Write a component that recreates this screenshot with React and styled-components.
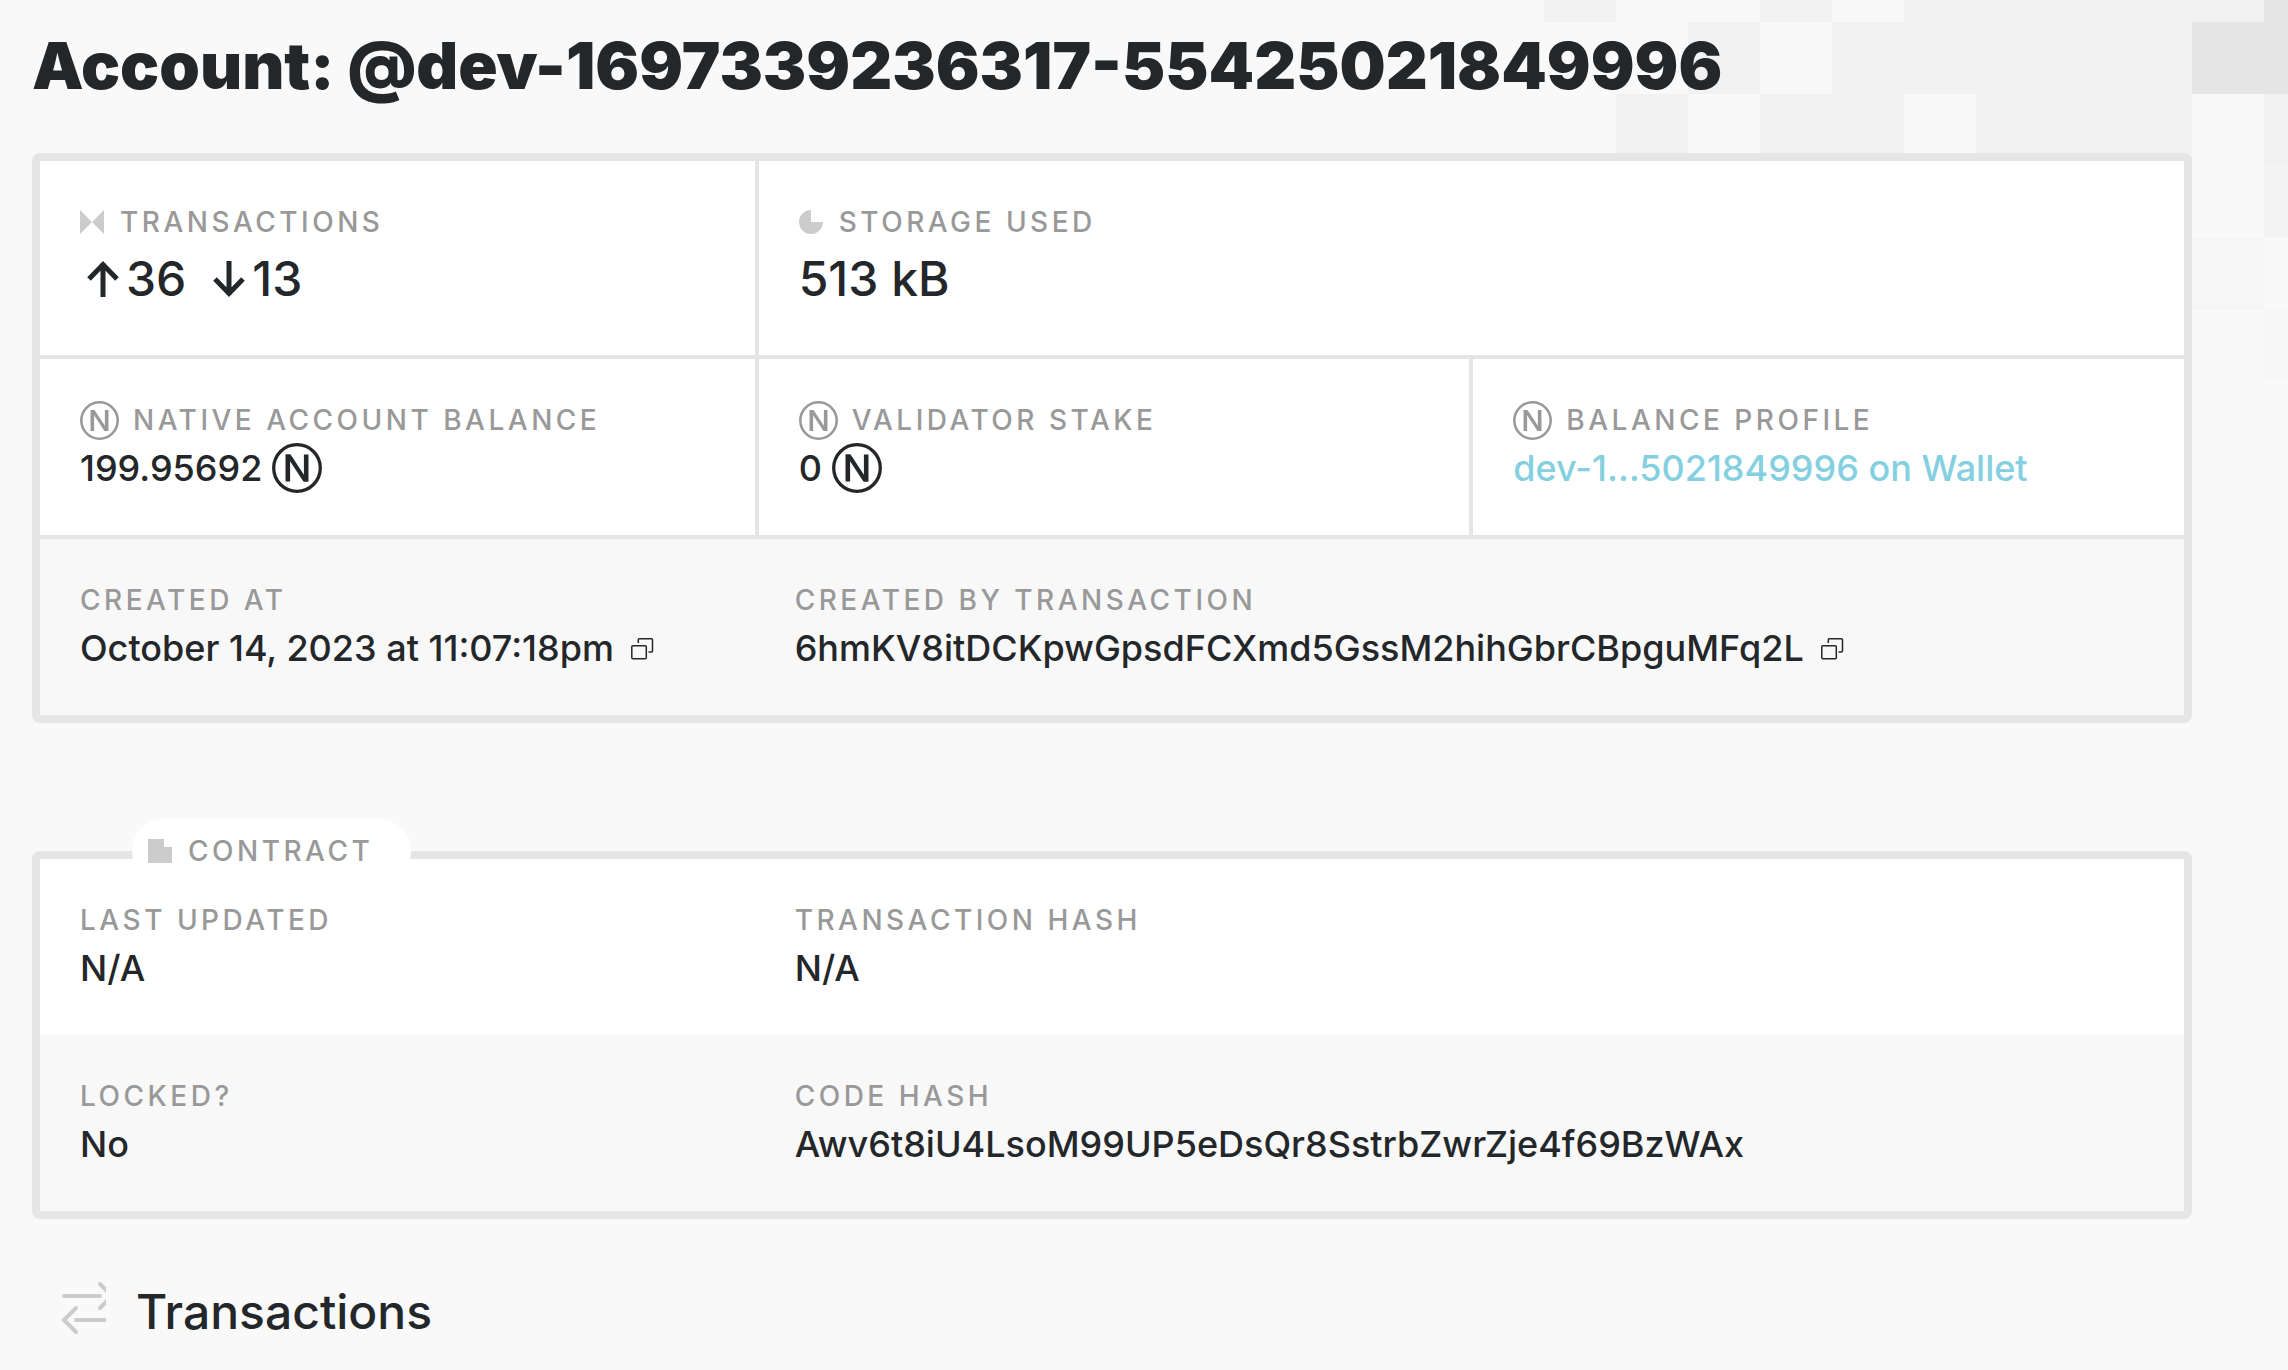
import React from 'react';
import styled, { createGlobalStyle } from 'styled-components';

const line = '#e5e5e5';
const ink = '#24272a';
const muted = '#999999';

const GlobalStyle = createGlobalStyle`
  * { box-sizing: border-box; }
  body {
    margin: 0;
    background: #f9f9f9;
    color: ${ink};
    font-family: Inter, 'Liberation Sans', sans-serif;
    font-size: 36px;
    font-weight: 500;
    line-height: 48px;
  }
`;

const Page = styled.div`
  position: relative;
  min-height: 100vh;
  overflow: hidden;
  display: flex;
  flex-direction: column;
`;

const Backdrop = styled.svg`
  position: absolute;
  top: 0;
  right: 0;
`;

const Main = styled.main`
  position: relative;
  flex: 1;
  padding: 24px 96px 30px 32px;
`;

const Title = styled.h1`
  margin: 0 0 45px;
  font-size: 65px;
  font-weight: 900;
  line-height: 84px;
`;

const Card = styled.section`
  position: relative;
  border: 8px solid ${line};
  border-radius: 8px;
  background: #ffffff;
  margin-bottom: ${(p) => p.$gap}px;
`;

const Row = styled.div`
  display: grid;
  grid-template-columns: repeat(3, 1fr);
  background: ${(p) => (p.$shaded ? '#f8f8f8' : '#ffffff')};
  border-top: ${(p) => (p.$ruled ? 4 : 0)}px solid ${line};
`;

const Cell = styled.div`
  grid-column: span ${(p) => p.$span || 1};
  padding: 37px 40px 43px;
  border-left: ${(p) => (p.$divided ? 4 : 0)}px solid ${line};
`;

const Label = styled.h2`
  display: flex;
  align-items: center;
  gap: ${(p) => p.$gap || 16}px;
  margin: 0;
  color: ${muted};
  font-size: 28px;
  font-weight: 500;
  line-height: 48px;
  letter-spacing: 0.125em;
  text-transform: uppercase;
`;

const Value = styled.div`
  display: flex;
  align-items: center;
  gap: ${(p) => p.$gap || 0}px;
  height: ${(p) => (p.$large ? 66 : 48)}px;
  font-size: ${(p) => (p.$large ? 48 : 36)}px;
  line-height: ${(p) => (p.$large ? 66 : 48)}px;
  white-space: nowrap;
`;

const Count = styled.span`
  display: flex;
  align-items: center;
`;

const WalletLink = styled.a`
  color: #84d0e0;
  text-decoration: none;
`;

const CopyButton = styled.button`
  display: flex;
  padding: 0;
  border: 0;
  background: none;
  color: ${ink};
  cursor: pointer;
`;

const Tab = styled.div`
  position: absolute;
  top: -40px;
  left: 92px;
  height: 64px;
  padding: 8px 38px 8px 16px;
  border-radius: 32px;
  background: #ffffff;
`;

const SectionHeading = styled.h2`
  display: flex;
  align-items: center;
  gap: 30px;
  margin: 0;
  padding-left: 28px;
  font-size: 48px;
  font-weight: 500;
  line-height: 64px;
`;

const FooterStrip = styled.div`
  position: relative;
  height: 13px;
  background: #f7f7f7;
`;

const tiles = [
  [0, 0, 72, 22, '#f1f1f1'],
  [216, 0, 72, 22, '#f1f1f1'],
  [360, 0, 360, 22, '#f1f1f1'],
  [720, 0, 24, 22, line],
  [144, 22, 72, 72, '#f1f1f1'],
  [288, 22, 360, 72, '#f1f1f1'],
  [648, 22, 96, 72, line],
  [72, 94, 72, 72, '#f1f1f1'],
  [216, 94, 144, 72, '#f1f1f1'],
  [432, 94, 216, 72, '#f1f1f1'],
  [720, 94, 24, 72, '#f1f1f1'],
  [720, 166, 24, 72, '#f3f3f3'],
  [648, 238, 72, 72, '#f6f6f6'],
  [720, 310, 24, 72, '#f7f7f7'],
];

const Mosaic = () => (
  <Backdrop width="744" height="382" aria-hidden="true">
    {tiles.map(([x, y, w, h, fill]) => (
      <rect key={`${x}-${y}`} x={x} y={y} width={w} height={h} fill={fill} />
    ))}
  </Backdrop>
);

const BowtieIcon = () => (
  <svg width="24" height="24" viewBox="0 0 24 24" fill="#cccccc" aria-hidden="true">
    <path d="M0 0 12 12 0 24zM24 0 12 12 24 24z" />
  </svg>
);

const PieIcon = () => (
  <svg width="24" height="24" viewBox="0 0 24 24" fill="#cccccc" aria-hidden="true">
    <path d="M12 0A12 12 0 1 0 24 12H12z" />
  </svg>
);

const DocIcon = () => (
  <svg width="24" height="24" viewBox="0 0 24 24" fill="#cccccc" aria-hidden="true">
    <path d="M0 0h16v8h8v16H0z" />
  </svg>
);

const NearIcon = ({ size }) => (
  <svg width={size} height={size} viewBox="0 0 50 50" fill="none" stroke="currentColor" aria-hidden="true">
    <circle cx="25" cy="25" r="23.3" strokeWidth="3.3" />
    <path d="M15.8 38.5V11.5M34.2 38.5V11.5" strokeWidth="4.6" />
    <path d="M13.6 11.5H18.6L36.4 38.5H31.4z" fill="currentColor" stroke="none" />
  </svg>
);

const ArrowIcon = ({ down }) => (
  <svg width="46" height="48" viewBox="0 0 46 48" fill="none" stroke="currentColor" strokeWidth="5" aria-hidden="true">
    <path d={down ? 'M23 6V40M9 24 23 38.5 37 24' : 'M23 42V8M9 24 23 9.5 37 24'} />
  </svg>
);

const CopyIcon = () => (
  <svg width="24" height="24" viewBox="0 0 24 24" fill="none" stroke="currentColor" strokeWidth="1.5" aria-hidden="true">
    <rect x="1.8" y="9.8" width="14.5" height="13" rx="1" />
    <path d="M8.3 7V3.8a1 1 0 0 1 1-1H21.5a1 1 0 0 1 1 1V15a1 1 0 0 1-1 1H18.5" />
  </svg>
);

const SwapIcon = () => (
  <svg width="46" height="60" viewBox="0 0 46 60" fill="none" stroke="#cccccc" strokeWidth="4" strokeLinecap="round" aria-hidden="true">
    <path d="M4 14H40M40 2 52 14 40 26M16 38H52M16 26 4 38 16 50" />
  </svg>
);

const Copyable = ({ children, name }) => (
  <Value $gap={16}>
    <span>{children}</span>
    <CopyButton type="button" aria-label={`Copy ${name}`}>
      <CopyIcon />
    </CopyButton>
  </Value>
);

export default function App() {
  return (
    <Page>
      <GlobalStyle />
      <Mosaic />
      <Main>
        <Title>Account: @dev-1697339236317-55425021849996</Title>

        <Card $gap={128}>
          <Row>
            <Cell>
              <Label><BowtieIcon />Transactions</Label>
              <Value $large $gap={20}>
                <Count><ArrowIcon />36</Count>
                <Count><ArrowIcon down />13</Count>
              </Value>
            </Cell>
            <Cell $divided $span={2}>
              <Label><PieIcon />Storage Used</Label>
              <Value $large>513 kB</Value>
            </Cell>
          </Row>
          <Row $ruled>
            <Cell>
              <Label $gap={14}><NearIcon size={39} />Native Account Balance</Label>
              <Value $gap={10}>199.95692<NearIcon size={50} /></Value>
            </Cell>
            <Cell $divided>
              <Label $gap={14}><NearIcon size={39} />Validator Stake</Label>
              <Value $gap={10}>0<NearIcon size={50} /></Value>
            </Cell>
            <Cell $divided>
              <Label $gap={14}><NearIcon size={39} />Balance Profile</Label>
              <Value><WalletLink href="#wallet">dev-1…5021849996 on Wallet</WalletLink></Value>
            </Cell>
          </Row>
          <Row $ruled $shaded>
            <Cell>
              <Label>Created At</Label>
              <Copyable name="creation date">October 14, 2023 at 11:07:18pm</Copyable>
            </Cell>
            <Cell $span={2}>
              <Label>Created By Transaction</Label>
              <Copyable name="transaction hash">6hmKV8itDCKpwGpsdFCXmd5GssM2hihGbrCBpguMFq2L</Copyable>
            </Cell>
          </Row>
        </Card>

        <Card $gap={61}>
          <Tab>
            <Label><DocIcon />Contract</Label>
          </Tab>
          <Row>
            <Cell>
              <Label>Last Updated</Label>
              <Value>N/A</Value>
            </Cell>
            <Cell $span={2}>
              <Label>Transaction Hash</Label>
              <Value>N/A</Value>
            </Cell>
          </Row>
          <Row $shaded>
            <Cell>
              <Label>Locked?</Label>
              <Value>No</Value>
            </Cell>
            <Cell $span={2}>
              <Label>Code Hash</Label>
              <Value>Awv6t8iU4LsoM99UP5eDsQr8SstrbZwrZje4f69BzWAx</Value>
            </Cell>
          </Row>
        </Card>

        <SectionHeading><SwapIcon />Transactions</SectionHeading>
      </Main>
      <FooterStrip />
    </Page>
  );
}
